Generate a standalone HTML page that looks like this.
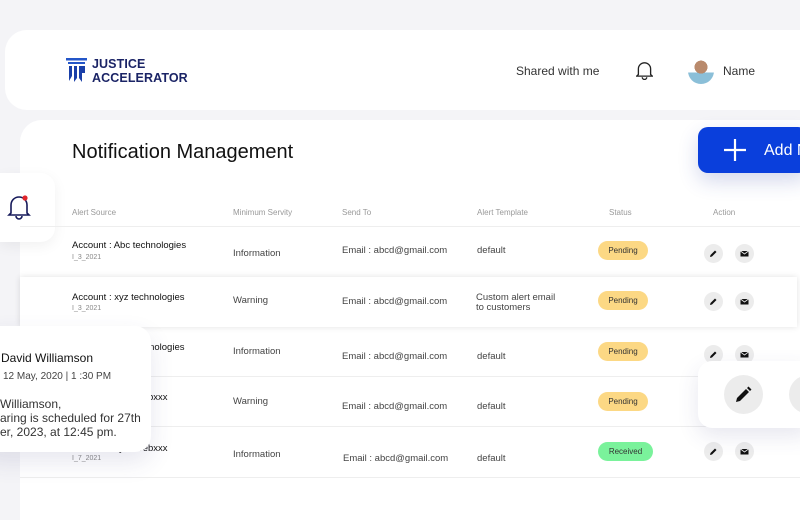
<!DOCTYPE html>
<html><head><meta charset="utf-8"><style>
*{margin:0;padding:0;box-sizing:border-box}
body{width:800px;height:500px;overflow:hidden;background:#f4f4f7;font-family:"Liberation Sans",sans-serif;position:relative;color:#222}
.a{position:absolute;white-space:nowrap}
.hdr{position:absolute;left:5px;top:30px;width:800px;height:80px;background:#fff;border-radius:22px 0 0 22px}
.main{position:absolute;left:20px;top:120px;width:790px;height:400px;background:#fff;border-radius:22px 0 0 0}
.th{font-size:8px;color:#999}
.t{font-size:9.5px;color:#444}
.b{font-size:9.5px;color:#111}
.s{font-size:7px;color:#888}
.line{position:absolute;left:20px;width:780px;height:1px;background:#eee}
.pill{position:absolute;width:50px;height:19px;border-radius:10px;background:#fcd884;font-size:8px;color:#333;text-align:center;line-height:19px}
.ic{position:absolute;width:19px;height:19px;border-radius:50%;background:#ececec}
.ic svg{position:absolute;left:5px;top:5px}
</style></head><body>
<div class="hdr"></div>
<svg class="a" style="left:66px;top:58px" width="22" height="25" viewBox="0 0 22 25"><rect x="0" y="0" width="21" height="2.5" fill="#2456c8"/><rect x="2" y="4" width="17" height="2" fill="#2456c8"/><path d="M3 8h3v10l-3 5zM8 8h3v12l-3 4zM13 8h6v7h-3v9l-3-4z" fill="#1a3fa8"/></svg>
<div class="a" style="left:92px;top:57px;font-size:12.5px;font-weight:bold;color:#1b2466;line-height:14px;letter-spacing:0.1px">JUSTICE<br>ACCELERATOR</div>
<div class="a" style="left:516px;top:64px;font-size:12px;color:#333">Shared with me</div>
<svg class="a" style="left:636px;top:60px" width="17" height="20" viewBox="0 0 15 18"><path d="M2 13V8a5.5 5.5 0 0 1 11 0v5l1.5 1.5h-14z M5.5 15.5a2 2 0 0 0 4 0" fill="none" stroke="#222" stroke-width="1.2"/></svg>
<div class="a" style="left:688px;top:58px;width:26px;height:26px;border-radius:50%;background:radial-gradient(circle at 50% 35%,#b98a6c 0 30%,transparent 31%),linear-gradient(#fff 55%,#8bbfd8 56%)"></div>
<div class="a" style="left:723px;top:64px;font-size:12px;color:#333">Name</div>
<div class="main"></div>
<div class="a" style="left:72px;top:141px;font-size:20px;color:#111">Notification Management</div>
<div class="a" style="left:698px;top:127px;width:110px;height:46px;background:#0a3fdc;border-radius:10px;box-shadow:0 8px 20px rgba(40,60,160,.2)"></div>
<svg class="a" style="left:723px;top:138px" width="24" height="24"><path d="M12 1v22M1 12h22" stroke="#fff" stroke-width="2.2"/></svg>
<div class="a" style="left:764px;top:142px;font-size:16px;color:#fff">Add N</div>
<div class="a" style="left:0;top:173px;width:55px;height:69px;background:#fff;border-radius:0 14px 14px 0;box-shadow:0 4px 14px rgba(0,0,0,.06)"></div>
<svg class="a" style="left:7px;top:193px" width="24" height="30" viewBox="0 0 24 30"><path d="M4 20V12a8 8 0 0 1 16 0v8l2 2H2z M9 23a3 3 0 0 0 6 0" fill="none" stroke="#15195a" stroke-width="1.6"/><circle cx="18" cy="5" r="2.6" fill="#e0252b"/></svg>
<div class="a th" style="left:72px;top:208px">Alert Source</div>
<div class="a th" style="left:233px;top:208px">Minimum Servity</div>
<div class="a th" style="left:342px;top:208px">Send To</div>
<div class="a th" style="left:477px;top:208px">Alert Template</div>
<div class="a th" style="left:609px;top:208px">Status</div>
<div class="a th" style="left:713px;top:208px">Action</div>
<div class="line" style="top:226px"></div>
<div class="line" style="top:376px"></div>
<div class="line" style="top:426px"></div>
<div class="line" style="top:477px"></div>
<div class="a" style="left:20px;top:277px;width:777px;height:50px;background:#fff;box-shadow:0 0 6px rgba(0,0,0,.12)"></div>
<div class="a b" style="left:72px;top:240px">Account : Abc technologies</div><div class="a s" style="left:72px;top:254px">I_3_2021</div>
<div class="a t" style="left:233px;top:248px">Information</div>
<div class="a t" style="left:342px;top:245px">Email : abcd@gmail.com</div>
<div class="a t" style="left:477px;top:245px">default</div>
<div class="pill" style="left:598px;top:241px">Pending</div>
<div class="a b" style="left:72px;top:292px">Account : xyz technologies</div><div class="a s" style="left:72px;top:305px">I_3_2021</div>
<div class="a t" style="left:233px;top:295px">Warning</div>
<div class="a t" style="left:342px;top:296px">Email : abcd@gmail.com</div>
<div class="a t" style="left:476px;top:293px;line-height:10px">Custom alert email<br>to customers</div>
<div class="pill" style="left:598px;top:291px">Pending</div>
<div class="a b" style="left:72px;top:342px">Account : xyz technologies</div>
<div class="a t" style="left:233px;top:346px">Information</div>
<div class="a t" style="left:342px;top:351px">Email : abcd@gmail.com</div>
<div class="a t" style="left:477px;top:351px">default</div>
<div class="pill" style="left:598px;top:342px">Pending</div>
<div class="a b" style="left:72px;top:392px">Account : xyz-atrebxxx</div>
<div class="a t" style="left:233px;top:396px">Warning</div>
<div class="a t" style="left:342px;top:401px">Email : abcd@gmail.com</div>
<div class="a t" style="left:477px;top:401px">default</div>
<div class="pill" style="left:598px;top:392px">Pending</div>
<div class="a b" style="left:72px;top:443px">Account : xyz-atrebxxx</div><div class="a s" style="left:72px;top:455px">I_7_2021</div>
<div class="a t" style="left:233px;top:449px">Information</div>
<div class="a t" style="left:343px;top:453px">Email : abcd@gmail.com</div>
<div class="a t" style="left:477px;top:453px">default</div>
<div class="pill" style="left:598px;top:442px;width:55px;background:#7af29b">Received</div>
<div class="ic" style="left:704px;top:244px"><svg width="9" height="9" viewBox="0 0 9 9"><path d="M1 8l.5-2L6 1.5 7.5 3 3 7.5z" fill="#111"/></svg></div>
<div class="ic" style="left:735px;top:244px"><svg width="9" height="9" viewBox="0 0 9 9"><rect x="0.5" y="2" width="8" height="5.5" fill="#111"/><path d="M0.5 2l4 3 4-3" stroke="#ececec" stroke-width=".8" fill="none"/></svg></div>
<div class="ic" style="left:704px;top:292px"><svg width="9" height="9" viewBox="0 0 9 9"><path d="M1 8l.5-2L6 1.5 7.5 3 3 7.5z" fill="#111"/></svg></div>
<div class="ic" style="left:735px;top:292px"><svg width="9" height="9" viewBox="0 0 9 9"><rect x="0.5" y="2" width="8" height="5.5" fill="#111"/><path d="M0.5 2l4 3 4-3" stroke="#ececec" stroke-width=".8" fill="none"/></svg></div>
<div class="ic" style="left:704px;top:345px"><svg width="9" height="9" viewBox="0 0 9 9"><path d="M1 8l.5-2L6 1.5 7.5 3 3 7.5z" fill="#111"/></svg></div>
<div class="ic" style="left:735px;top:345px"><svg width="9" height="9" viewBox="0 0 9 9"><rect x="0.5" y="2" width="8" height="5.5" fill="#111"/><path d="M0.5 2l4 3 4-3" stroke="#ececec" stroke-width=".8" fill="none"/></svg></div>
<div class="ic" style="left:704px;top:442px"><svg width="9" height="9" viewBox="0 0 9 9"><path d="M1 8l.5-2L6 1.5 7.5 3 3 7.5z" fill="#111"/></svg></div>
<div class="ic" style="left:735px;top:442px"><svg width="9" height="9" viewBox="0 0 9 9"><rect x="0.5" y="2" width="8" height="5.5" fill="#111"/><path d="M0.5 2l4 3 4-3" stroke="#ececec" stroke-width=".8" fill="none"/></svg></div>
<div class="a" style="left:698px;top:361px;width:110px;height:67px;background:#fff;border-radius:14px 0 0 14px;box-shadow:0 8px 22px rgba(60,60,120,.12)"></div>
<div class="a" style="left:724px;top:375px;width:39px;height:39px;border-radius:50%;background:#ececec"></div>
<svg class="a" style="left:735px;top:386px" width="17" height="17" viewBox="0 0 17 17"><path d="M1 16l1-4L11 3l3 3-9 9z M12 2l1.5-1.5 3 3L15 5z" fill="#111"/></svg>
<div class="a" style="left:789px;top:375px;width:39px;height:39px;border-radius:50%;background:#ececec"></div>
<div class="a" style="left:-20px;top:326px;width:171px;height:126px;background:#fff;border-radius:16px;box-shadow:0 10px 24px rgba(60,60,120,.12)"></div>
<div class="a" style="left:1px;top:351px;font-size:12px;color:#111">David Williamson</div>
<div class="a" style="left:3px;top:371px;font-size:10px;color:#444">12 May, 2020 | 1 :30 PM</div>
<div class="a" style="left:0;top:397px;font-size:12px;color:#333;line-height:14px">Williamson,<br>aring is scheduled for 27th<br>er, 2023, at 12:45 pm.</div>
</body></html>
